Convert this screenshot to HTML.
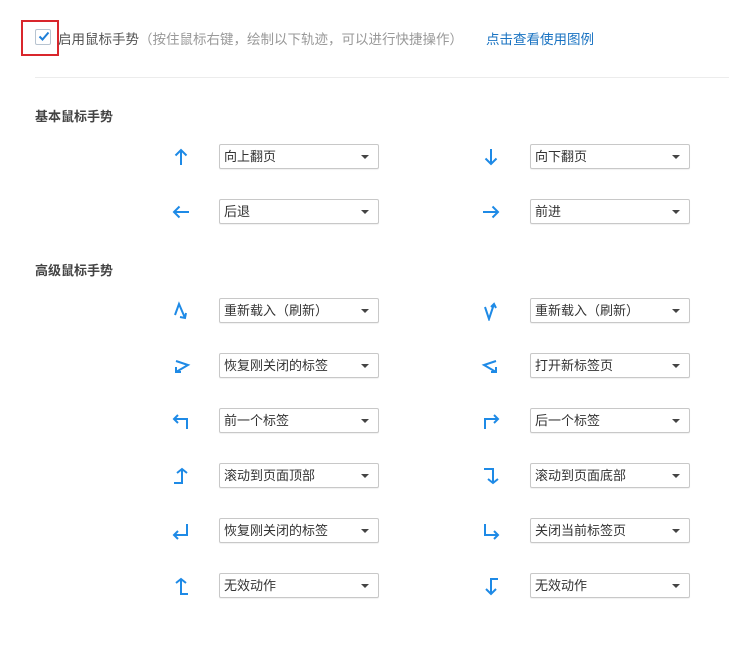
<!DOCTYPE html>
<html><head><meta charset="utf-8"><style>
body{margin:0;width:729px;height:650px;background:#fff;font-family:"Liberation Sans","Noto Sans CJK SC",sans-serif;font-size:13px;color:#333;position:relative;overflow:hidden}
.a{position:absolute}
.sel{position:absolute;width:160px;height:25px;border:1px solid #c8c8c8;border-radius:2px;background:#fff;box-shadow:0 1px 1px rgba(0,0,0,.06);line-height:23px;padding-left:4px;box-sizing:border-box;color:#333}
.sel:after{content:"";position:absolute;right:9px;top:10px;border-left:4px solid transparent;border-right:4px solid transparent;border-top:4px solid #444}
svg{position:absolute;width:20px;height:20px}
svg path{fill:none;stroke:#1e8ae6;stroke-width:2;stroke-linejoin:miter}
.h{position:absolute;left:35px;font-weight:bold;color:#444}
</style></head><body>
<div class="a" style="left:21px;top:20px;width:38px;height:36px;border:2px solid #d9262c;box-sizing:border-box"></div>
<div class="a" style="left:35px;top:29px;width:14px;height:14px;border:1px solid #b8c4d0;border-radius:2px;background:#fff"></div>
<svg style="left:36px;top:28px;width:16px;height:16px" viewBox="0 0 16 16"><path d="M3.5 8.5l3 3 6-7" style="stroke:#1e7fd8"/></svg>
<div class="a" style="left:58px;top:28px;white-space:nowrap;font-size:13.5px"><span style="color:#555">启用鼠标手势</span><span style="color:#999">（按住鼠标右键，绘制以下轨迹，可以进行快捷操作）</span></div>
<div class="a" style="left:486px;top:28px;color:#1a73c2;font-size:13.5px">点击查看使用图例</div>
<div class="a" style="left:35px;top:77px;width:694px;height:1px;background:#ececec"></div>
<div class="h" style="top:106px">基本鼠标手势</div>
<div class="h" style="top:260px">高级鼠标手势</div>

<svg style="left:171px;top:147px" viewBox="0 0 20 20"><path d="M10 18V3M4.5 8.5L10 3l5.5 5.5"/></svg>
<div class="sel" style="left:219px;top:144px">向上翻页</div>
<svg style="left:481px;top:147px" viewBox="0 0 20 20"><path d="M10 2v15M4.5 11.5L10 17l5.5-5.5"/></svg>
<div class="sel" style="left:530px;top:144px">向下翻页</div>

<svg style="left:171px;top:202px" viewBox="0 0 20 20"><path d="M18 10H3M8.5 4.5L3 10l5.5 5.5"/></svg>
<div class="sel" style="left:219px;top:199px">后退</div>
<svg style="left:481px;top:202px" viewBox="0 0 20 20"><path d="M2 10h15M11.5 4.5L17 10l-5.5 5.5"/></svg>
<div class="sel" style="left:530px;top:199px">前进</div>

<svg style="left:171px;top:301px" viewBox="0 0 20 20"><path d="M4 14L8 3l6 14M9 16l5 1 1-5"/></svg>
<div class="sel" style="left:219px;top:298px">重新载入（刷新）</div>
<svg style="left:481px;top:301px" viewBox="0 0 20 20"><path d="M4 6l4 12 5-15M10 6l3-3 2 4"/></svg>
<div class="sel" style="left:530px;top:298px">重新载入（刷新）</div>

<svg style="left:171px;top:356px" viewBox="0 0 20 20"><path d="M5 5l12 4-12 7M5 11v5h5"/></svg>
<div class="sel" style="left:219px;top:353px">恢复刚关闭的标签</div>
<svg style="left:481px;top:356px" viewBox="0 0 20 20"><path d="M15 5L3 9l12 7M15 11v5h-5"/></svg>
<div class="sel" style="left:530px;top:353px">打开新标签页</div>

<svg style="left:171px;top:411px" viewBox="0 0 20 20"><path d="M16 18V8H3M7 4L3 8l4 4"/></svg>
<div class="sel" style="left:219px;top:408px">前一个标签</div>
<svg style="left:481px;top:411px" viewBox="0 0 20 20"><path d="M4 18V8h13M13 4l4 4-4 4"/></svg>
<div class="sel" style="left:530px;top:408px">后一个标签</div>

<svg style="left:171px;top:466px" viewBox="0 0 20 20"><path d="M3 17h8V3M6 7l5-4 5 4"/></svg>
<div class="sel" style="left:219px;top:463px">滚动到页面顶部</div>
<svg style="left:481px;top:466px" viewBox="0 0 20 20"><path d="M3 3h9v14M7 13l5 4 5-4"/></svg>
<div class="sel" style="left:530px;top:463px">滚动到页面底部</div>

<svg style="left:171px;top:521px" viewBox="0 0 20 20"><path d="M16 3v11H3M7 10l-4 4 4 4"/></svg>
<div class="sel" style="left:219px;top:518px">恢复刚关闭的标签</div>
<svg style="left:481px;top:521px" viewBox="0 0 20 20"><path d="M4 3v11h13M13 10l4 4-4 4"/></svg>
<div class="sel" style="left:530px;top:518px">关闭当前标签页</div>

<svg style="left:171px;top:576px" viewBox="0 0 20 20"><path d="M17 18h-7V3M5 7l5-4 5 4"/></svg>
<div class="sel" style="left:219px;top:573px">无效动作</div>
<svg style="left:481px;top:576px" viewBox="0 0 20 20"><path d="M17 3h-7v15M5 13l5 5 5-5"/></svg>
<div class="sel" style="left:530px;top:573px">无效动作</div>
</body></html>
